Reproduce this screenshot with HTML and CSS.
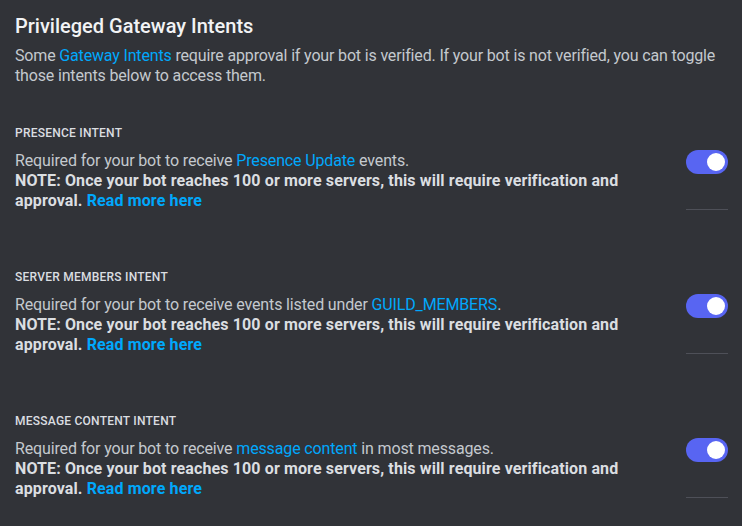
FILE: index.html
```html
<!DOCTYPE html>
<html>
<head>
<meta charset="utf-8">
<link rel="stylesheet" href="styles.css">
</head>
<body>
<main class="page">
  <h1 class="title">Privileged Gateway Intents</h1>
  <p class="desc">Some <a class="link">Gateway Intents</a> require approval if your bot is verified. If your bot is not verified, you can toggle those intents below to access them.</p>

  <section class="intent">
    <h2 class="label">PRESENCE INTENT</h2>
    <div class="row">
      <div class="text">
        <p class="plain">Required for your bot to receive <a class="link">Presence Update</a> events.</p>
        <p class="note">NOTE: Once your bot reaches 100 or more servers, this will require verification and approval. <a class="link">Read more here</a></p>
      </div>
      <div class="side">
        <div class="toggle"><span class="knob"></span></div>
        <div class="divider"></div>
      </div>
    </div>
  </section>

  <section class="intent">
    <h2 class="label">SERVER MEMBERS INTENT</h2>
    <div class="row">
      <div class="text">
        <p class="plain">Required for your bot to receive events listed under <a class="link">GUILD_MEMBERS</a>.</p>
        <p class="note">NOTE: Once your bot reaches 100 or more servers, this will require verification and approval. <a class="link">Read more here</a></p>
      </div>
      <div class="side">
        <div class="toggle"><span class="knob"></span></div>
        <div class="divider"></div>
      </div>
    </div>
  </section>

  <section class="intent">
    <h2 class="label">MESSAGE CONTENT INTENT</h2>
    <div class="row">
      <div class="text">
        <p class="plain">Required for your bot to receive <a class="link">message content</a> in most messages.</p>
        <p class="note">NOTE: Once your bot reaches 100 or more servers, this will require verification and approval. <a class="link">Read more here</a></p>
      </div>
      <div class="side">
        <div class="toggle"><span class="knob"></span></div>
        <div class="divider"></div>
      </div>
    </div>
  </section>
</main>
</body>
</html>
```

FILE: styles.css
```css
html, body {
  margin: 0;
  padding: 0;
  background: #313338;
  height: 100%;
  overflow: hidden;
}
.page {
  padding: 14px 14px 0 15px;
  font-family: Roboto, "Noto Sans", sans-serif;
  color: #dbdee1;
}
.title {
  margin: 0;
  font-size: 20px;
  line-height: 24px;
  font-weight: 500;
  color: #f2f3f5;
}
.desc {
  margin: 8px 0 0 0;
  font-size: 16px;
  line-height: 20px;
  letter-spacing: -0.16px;
  color: #c4c9ce;
}
.link {
  color: #00a8fc;
  text-decoration: none;
}
.intent {
  margin-top: 39px;
}
.intent + .intent {
  margin-top: 58px;
}
.label {
  margin: 0;
  font-size: 12px;
  line-height: 16px;
  font-weight: 500;
  letter-spacing: 0.02em;
  color: #dbdee1;
}
.row {
  margin-top: 10px;
  display: flex;
  gap: 16px;
}
.text {
  flex: 1;
}
.plain {
  margin: 0;
  font-size: 16px;
  line-height: 20px;
  letter-spacing: -0.14px;
  color: #c4c9ce;
}
.note {
  margin: 0;
  font-size: 16px;
  line-height: 20px;
  font-weight: 700;
  letter-spacing: 0.12px;
  color: #dbdee1;
}
.side {
  width: 42px;
  display: flex;
  flex-direction: column;
  margin-top: -1px;
}
.toggle {
  width: 42px;
  height: 24px;
  border-radius: 12px;
  background: #5865f2;
  display: flex;
  align-items: center;
  justify-content: flex-end;
  padding-right: 3px;
  box-sizing: border-box;
}
.knob {
  width: 18px;
  height: 18px;
  border-radius: 50%;
  background: #ffffff;
}
.divider {
  margin-top: auto;
  margin-bottom: 1px;
  height: 1px;
  background: #4e5058;
}
```
